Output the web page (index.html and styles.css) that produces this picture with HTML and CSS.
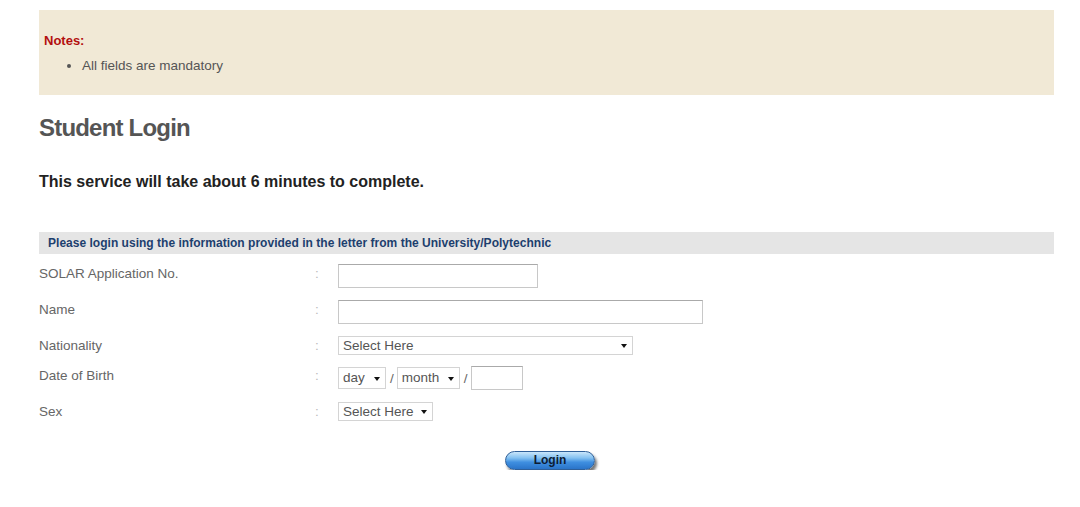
FILE: index.html
```html
<!DOCTYPE html>
<html lang="en">
<head>
    <meta charset="UTF-8">
    <meta name="viewport" content="width=device-width, initial-scale=1.0">
    <title>Student Login</title>
    <link rel="stylesheet" href="styles.css">
</head>
<body>
    <div class="page">
        <div class="notes">
            <p class="notes-title">Notes:</p>
            <ul>
                <li>All fields are mandatory</li>
            </ul>
        </div>

        <h1>Student Login</h1>
        <p class="intro">This service will take about 6 minutes to complete.</p>

        <div class="form-header">Please login using the information provided in the letter from the University/Polytechnic</div>

        <form class="login-form" onsubmit="return false;">
            <div class="row">
                <label for="app-no">SOLAR Application No.</label>
                <span class="colon">:</span>
                <div class="field"><input type="text" id="app-no" class="input-app"></div>
            </div>
            <div class="row">
                <label for="name">Name</label>
                <span class="colon">:</span>
                <div class="field"><input type="text" id="name" class="input-name"></div>
            </div>
            <div class="row row-short">
                <label for="nationality">Nationality</label>
                <span class="colon">:</span>
                <div class="field">
                    <span class="select select-nation"><select id="nationality"><option>Select Here</option></select></span>
                </div>
            </div>
            <div class="row">
                <label for="dob-day">Date of Birth</label>
                <span class="colon">:</span>
                <div class="field dob">
                    <span class="select select-day"><select id="dob-day"><option>day</option></select></span>
                    <span class="slash">/</span>
                    <span class="select select-month"><select id="dob-month"><option>month</option></select></span>
                    <span class="slash">/</span>
                    <input type="text" id="dob-year" class="input-year">
                </div>
            </div>
            <div class="row">
                <label for="sex">Sex</label>
                <span class="colon">:</span>
                <div class="field">
                    <span class="select select-sex"><select id="sex"><option>Select Here</option></select></span>
                </div>
            </div>

            <div class="actions">
                <button type="submit" class="login-btn">Login</button>
            </div>
        </form>
    </div>
</body>
</html>
```

FILE: styles.css
```css
body {
    margin: 0;
    font-family: "Liberation Sans", Arial, sans-serif;
    font-size: 13.5px;
    color: #555;
    background: #fff;
}
.page {
    width: 1015px;
    margin: 0 0 0 39px;
    padding-top: 10px;
}
.notes {
    background-color: #f1e9d6;
    padding: 23px 5px 21px;
}
.notes-title {
    margin: 0;
    color: #b30f0f;
    font-weight: bold;
    font-size: 13px;
    line-height: 16px;
}
.notes ul {
    margin: 9px 0 0;
    padding-left: 38px;
}
.notes li {
    line-height: 16px;
    color: #555;
}
h1 {
    margin: 18px 0 0;
    font-size: 24px;
    letter-spacing: -0.8px;
    line-height: 30px;
    color: #555;
}
.intro {
    margin: 30px 0 0;
    font-size: 16px;
    font-weight: bold;
    color: #222;
    line-height: 18px;
}
.form-header {
    margin-top: 41px;
    height: 22px;
    line-height: 22px;
    background-color: #e5e5e5;
    padding-left: 9px;
    font-size: 12px;
    font-weight: bold;
    letter-spacing: 0.02px;
    color: #1d3f6e;
}
.login-form {
    margin-top: 10px;
}
.row {
    display: grid;
    grid-template-columns: 276px 23px 1fr;
    height: 36px;
    align-items: start;
}
.row-short {
    height: 30px;
}
.row label,
.colon {
    line-height: 19px;
    color: #666;
}
.colon {
    color: #bbb;
}
.field {
    display: flex;
    align-items: center;
}
input[type="text"] {
    box-sizing: border-box;
    height: 24px;
    margin: 0;
    border: 1px solid #c8c8c8;
    border-top-color: #aaa;
    padding: 2px 4px;
    font: inherit;
}
.input-app {
    width: 200px;
}
.input-name {
    width: 365px;
}
.input-year {
    width: 52px;
}
.select {
    position: relative;
    display: inline-block;
    box-sizing: border-box;
    height: 19px;
    border: 1px solid #d4d4d4;
    background: #fff;
}
.select select {
    appearance: none;
    -webkit-appearance: none;
    border: none;
    background: transparent;
    width: 100%;
    height: 17px;
    padding: 0 0 0 4px;
    margin: 0;
    font: inherit;
    color: #555;
    line-height: 17px;
    outline: none;
}
.select::after {
    content: "";
    position: absolute;
    right: 5px;
    top: 7px;
    border-left: 3.5px solid transparent;
    border-right: 3.5px solid transparent;
    border-top: 4px solid #111;
    pointer-events: none;
}
.select-nation {
    width: 295px;
}
.select-sex {
    width: 95px;
}
.dob {
    height: 24px;
}
.dob .select {
    height: 22px;
}
.dob .select select {
    height: 20px;
    line-height: 20px;
}
.dob .select::after {
    top: 9px;
}
.select-day {
    width: 48px;
}
.select-month {
    width: 63px;
}
.slash {
    color: #666;
    margin: 0 3px 0 4px;
}
.actions {
    padding: 13px 0 0 466px;
}
.login-btn {
    width: 90px;
    height: 19px;
    padding: 0;
    border: 1px solid #2f5f98;
    border-radius: 10px;
    background: linear-gradient(to bottom, #c9e6fb 0%, #84c1f1 35%, #3f8fe0 60%, #2a74c9 100%);
    box-shadow: 2px 3px 3px rgba(0, 0, 0, 0.55);
    font-family: "Liberation Sans", Arial, sans-serif;
    font-size: 12px;
    font-weight: bold;
    color: #0e1c33;
    line-height: 17px;
    cursor: pointer;
}
```
